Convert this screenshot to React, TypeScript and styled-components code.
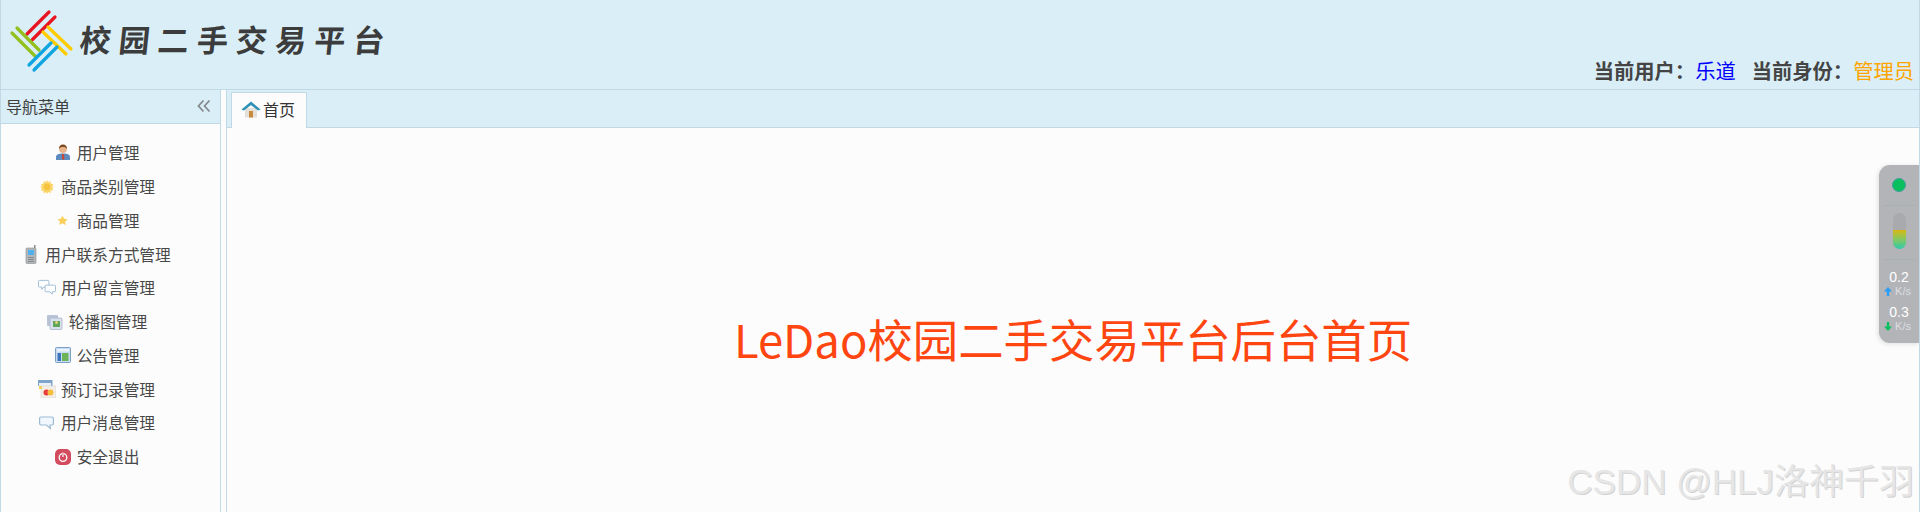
import React, { ReactNode } from 'react';
import styled, { createGlobalStyle } from 'styled-components';

const CJK = '"Noto Sans CJK SC", "Noto Sans", sans-serif';
const LINE = '#c0d9e4';
const SKY = '#d9eef6';
const PAPER = '#fcfcfc';

const GlobalStyle = createGlobalStyle`
    html, body { margin: 0; padding: 0; height: 512px; overflow: hidden; background: ${PAPER}; }
    body { font-family: ${CJK}; }
`;

const Page = styled.div`
    position: relative;
    width: 1920px;
    height: 512px;
    display: flex;
    flex-direction: column;
    box-sizing: border-box;
    border-left: 1px solid ${LINE};
    border-right: 1px solid ${LINE};
    overflow: hidden;
`;

const Header = styled.header`
    flex: 0 0 90px;
    box-sizing: border-box;
    display: flex;
    align-items: flex-start;
    background: ${SKY};
    border-bottom: 1px solid ${LINE};
`;

const Logo = styled.svg`
    flex: none;
    width: 79px;
    height: 79px;
`;

const Brand = styled.div`
    margin-top: 14px;
    font-size: 31px;
    line-height: 50px;
    font-weight: 700;
    letter-spacing: 8.1px;
    color: #3c3c3c;
    transform: skewX(-6deg);
`;

const UserInfo = styled.div`
    margin: auto 5px 4px auto;
    font-size: 20.3px;
    line-height: 30px;
    font-weight: 700;
    color: #444;
    white-space: nowrap;
`;

const UserValue = styled.span<{ $color: string }>`
    font-weight: 400;
    color: ${(p) => p.$color};
    margin-right: ${(p) => (p.$color === '#0000ff' ? '16px' : '0')};
`;

const Body = styled.div`
    flex: 1;
    display: flex;
    min-height: 0;
`;

const Sidebar = styled.aside`
    flex: 0 0 219px;
    border-right: 1px solid ${LINE};
    background: ${PAPER};
`;

const PanelTitle = styled.div`
    height: 34px;
    display: flex;
    align-items: center;
    justify-content: space-between;
    padding: 0 9px 2px 5px;
    box-sizing: border-box;
    background: ${SKY};
    border-bottom: 1px solid ${LINE};
    font-size: 16px;
    color: #3f3f3f;
`;

const Menu = styled.ul`
    list-style: none;
    margin: 0;
    padding: 12px 5px 0 0;
`;

const MenuRow = styled.li`
    height: 33.75px;
    display: flex;
    align-items: center;
    justify-content: center;
    font-size: 15.7px;
    color: #484848;
`;

const IconSlot = styled.span`
    width: 18px;
    height: 18px;
    margin-left: -23px;
    margin-right: 5px;
    display: flex;
    align-items: center;
    justify-content: center;

    svg { display: block; }
`;

const Main = styled.main`
    flex: 1;
    margin-left: 5px;
    border-left: 1px solid ${LINE};
    display: flex;
    flex-direction: column;
    background: ${PAPER};
`;

const TabStrip = styled.div`
    height: 37px;
    padding-left: 4px;
    display: flex;
    align-items: flex-end;
    background: ${SKY};
    border-bottom: 1px solid ${LINE};
`;

const Tab = styled.div`
    position: relative;
    top: 1px;
    box-sizing: border-box;
    width: 76px;
    height: 36px;
    padding: 0 0 3px 9px;
    display: flex;
    align-items: center;
    gap: 2px;
    font-size: 16px;
    color: #333;
    background: ${PAPER};
    border: 1px solid ${LINE};
    border-bottom: none;
`;

const Welcome = styled.div`
    flex: 1;
    display: flex;
    justify-content: center;
    padding-top: 176px;
    font-size: 45.4px;
    line-height: 68px;
    color: #ff4510;
`;

const Watermark = styled.div`
    position: absolute;
    right: 5px;
    bottom: 12px;
    font-family: "Liberation Sans", ${CJK};
    font-size: 35px;
    line-height: 36px;
    color: #e6e6e6;
    text-shadow: 1px 1px 0 #d2d2d2;
    white-space: nowrap;
`;

const Monitor = styled.div`
    position: absolute;
    top: 165px;
    right: 0;
    width: 40px;
    height: 178px;
    box-sizing: border-box;
    display: flex;
    flex-direction: column;
    align-items: center;
    background: #b3b4b8;
    border-radius: 11px 0 0 11px;
    box-shadow: -1px 1px 5px rgba(0, 0, 0, 0.12);
`;

const Lamp = styled.div`
    flex: none;
    box-sizing: border-box;
    width: 14px;
    height: 14px;
    margin-top: 13px;
    border-radius: 50%;
    background: #0abf5e;
    border: 1px solid #3f9ea0;
`;

const Rule = styled.div`
    flex: none;
    align-self: stretch;
    margin: 0 4px;
    height: 1px;
    background: #a9b0b2;
`;

const LampRule = styled(Rule)`
    margin-top: 13px;
`;

const Capsule = styled.div`
    flex: none;
    position: relative;
    width: 13px;
    height: 36px;
    margin: 7px 0 10px;
    border-radius: 7px;
    background: #a8aaae;
    overflow: hidden;
`;

const CapsuleFill = styled.div`
    position: absolute;
    left: 0;
    right: 0;
    bottom: 0;
    height: 19px;
    background: linear-gradient(#d8b716, #8cc85a 45%, #2ecbae);
`;

const Rate = styled.div`
    flex: none;
    margin-top: 9px;
    display: flex;
    flex-direction: column;
    align-items: center;
    font-family: "Liberation Sans", "Noto Sans", sans-serif;
    color: #fff;

    & + & { margin-top: 6px; }
`;

const RateValue = styled.div`
    font-size: 14px;
    line-height: 16px;
`;

const RateUnit = styled.div`
    display: flex;
    align-items: center;
    gap: 3px;
    margin-left: -3px;
    font-size: 11px;
    line-height: 13px;
    color: #dcdde0;
`;

const Chevrons = () => (
    <svg width="14" height="14" viewBox="0 0 14 14" fill="none" stroke="#858a8e" strokeWidth="1.8">
        <path d="M6.500 1.500 1.500 7l5 5.500M12.500 1.500 7.500 7l5 5.500" />
    </svg>
);

const HomeIcon = () => (
    <svg width="20" height="18" viewBox="0 0 20 18">
        <path d="M4 8h12v9.500H4z" fill="#e3dfd9" />
        <path d="M8 11h4v6.500H8z" fill="#c98a3e" />
        <path d="M.5 9.500 10 1.500l9.500 8-2.500 1L10 5 3 10.500z" fill="#2c90b6" />
    </svg>
);

const UserIcon = () => (
    <svg width="16" height="17" viewBox="0 0 16 17">
        <path d="M1 16v-3c0-2 2-3.500 7-3.500s7 1.500 7 3.500v3z" fill="#5e8cc0" />
        <path d="M7 10h2l.5 5-1.500 1-1-1z" fill="#c44b3c" />
        <circle cx="8" cy="5" r="4" fill="#e7b48d" />
        <path d="M4 5c0-3 1.500-4.500 4-4.500S12 2 12 5c-1-1.500-2-2-4-2s-3 .5-4 2z" fill="#7c4a22" />
    </svg>
);

const SunIcon = () => (
    <svg width="14" height="14" viewBox="0 0 14 14">
        <path
            d="M7 0l1.200 2.300L10.500 1l.2 2.700 2.700.2-1.300 2.300L14 7l-1.900 1 1.300 2.300-2.700.2-.2 2.700-2.300-1.300L7 14l-1-1.900-2.300 1.300-.2-2.700-2.700-.2L2.100 8 0 7l2.100-1-1.300-2.100 2.700-.2.2-2.700L6 2.300z"
            fill="#fbd568"
        />
        <circle cx="7" cy="7" r="3.200" fill="#f4c440" />
    </svg>
);

const StarIcon = () => (
    <svg width="11" height="11" viewBox="0 0 24 24">
        <path d="M12 1l3.400 7.300 7.900 1-5.800 5.400 1.500 7.900L12 17.800l-7 3.800 1.500-7.900L.7 9.300l7.900-1z" fill="#f9cf5a" />
    </svg>
);

const PhoneIcon = () => (
    <svg width="12" height="19" viewBox="0 0 12 19">
        <path d="M9 0h1.500v3H9z" fill="#8a8a8a" />
        <rect x="1" y="3" width="10" height="15.500" rx="1" fill="#b4b7ba" stroke="#8b8e92" strokeWidth=".6" />
        <rect x="3" y="5" width="6" height="5" fill="#4fb0ee" />
        <path d="M3 12h6v1H3zm0 2h6v1H3zm0 2h6v1H3z" fill="#85888c" />
    </svg>
);

const ChatIcon = () => (
    <svg width="19" height="17" viewBox="0 0 19 17" fill="#fff" stroke="#9dbbd6" strokeWidth="1">
        <path d="M1.500 1h9c.8 0 1 .5 1 1v5c0 .6-.3 1-1 1H6l-2 2.500V8H1.500c-.7 0-1-.4-1-1V2c0-.5.3-1 1-1z" />
        <path d="M8.500 6h9c.6 0 1 .4 1 1v5c0 .6-.4 1-1 1H15v2.500L12.500 13h-4c-.6 0-1-.4-1-1V7c0-.6.4-1 1-1z" />
    </svg>
);

const PictureIcon = () => (
    <svg width="17" height="16" viewBox="0 0 17 16">
        <rect x="1" y="1" width="11" height="11" rx="1" fill="#b9c4d6" />
        <rect x="4" y="4" width="12" height="11.500" rx="1" fill="#d9e1ee" stroke="#a7b4c9" strokeWidth=".8" />
        <rect x="7" y="7" width="7" height="6" fill="#5ea65a" />
        <circle cx="10.500" cy="8.500" r="1.500" fill="#e7cf7c" />
    </svg>
);

const BoardIcon = () => (
    <svg width="16" height="16" viewBox="0 0 16 16">
        <rect x=".5" y=".5" width="15" height="15" rx="1" fill="#c7dcf2" stroke="#7d9fc4" />
        <path d="M2 2h12v2.500H2z" fill="#e9f2fb" />
        <path d="M2.500 6H6v8H2.500z" fill="#3f75bb" />
        <path d="M7 6h6.500v8H7z" fill="#6db35a" />
    </svg>
);

const OrderIcon = () => (
    <svg width="18" height="18" viewBox="0 0 18 18">
        <path d="M0 0h14.500v6H0z" fill="#7fa4cc" />
        <path d="M1 3h12v6H1z" fill="#e9f0f8" />
        <rect x="3" y="6" width="15" height="12" fill="#f2eee7" stroke="#d5cfc4" strokeWidth=".5" />
        <path d="M1 6h3v3H1z" fill="#f3cf5a" />
        <circle cx="8.500" cy="12.500" r="3" fill="#ea3b3b" />
        <circle cx="12.500" cy="12.500" r="3" fill="#f5be3d" />
    </svg>
);

const BubbleIcon = () => (
    <svg width="15" height="14" viewBox="0 0 15 14" fill="#f2f7fd" stroke="#9dbbd6" strokeWidth="1.200">
        <path d="M2 1h11c.8 0 1.400.6 1.400 1.400v5.200c0 .8-.6 1.400-1.400 1.400h-2l.4 3.500L7.500 9H2C1.200 9 .6 8.400.6 7.600V2.400C.6 1.600 1.200 1 2 1z" />
    </svg>
);

const PowerIcon = () => (
    <svg width="16" height="16" viewBox="0 0 16 16">
        <rect width="16" height="16" rx="5" fill="#d34b5e" />
        <circle cx="8" cy="8.500" r="3.800" fill="none" stroke="#fff" strokeWidth="1.300" />
        <path d="M7 3h2v5H7z" fill="#d34b5e" />
        <path d="M7.400 3.500h1.200v4.500H7.400z" fill="#fff" />
    </svg>
);

const ArrowUp = () => (
    <svg width="8" height="9" viewBox="0 0 8 9">
        <path d="M4 0l4 4.500H5.200V9H2.800V4.500H0z" fill="#2a9df4" />
    </svg>
);

const ArrowDown = () => (
    <svg width="8" height="9" viewBox="0 0 8 9">
        <path d="M4 9L0 4.500h2.800V0h2.400v4.500H8z" fill="#0abf5e" />
    </svg>
);

const menuItems: { label: string; icon: ReactNode }[] = [
    { label: '用户管理', icon: <UserIcon /> },
    { label: '商品类别管理', icon: <SunIcon /> },
    { label: '商品管理', icon: <StarIcon /> },
    { label: '用户联系方式管理', icon: <PhoneIcon /> },
    { label: '用户留言管理', icon: <ChatIcon /> },
    { label: '轮播图管理', icon: <PictureIcon /> },
    { label: '公告管理', icon: <BoardIcon /> },
    { label: '预订记录管理', icon: <OrderIcon /> },
    { label: '用户消息管理', icon: <BubbleIcon /> },
    { label: '安全退出', icon: <PowerIcon /> },
];

const App = () => {
    return (
        <Page>
            <GlobalStyle />
            <Header>
                <Logo viewBox="0 0 79 79" fill="none" strokeWidth="3.200" strokeLinecap="round">
                    <g stroke="#e8141f">
                        <path d="M26 34 48 12M31 40 54 17" />
                    </g>
                    <g stroke="#93c01f">
                        <path d="M11 33 34 56M16 28 38 50" />
                    </g>
                    <g stroke="#ffcc00">
                        <path d="M47 27 70 49M42 32 65 54" />
                    </g>
                    <g stroke="#0ea5e0">
                        <path d="M28 65 50 43M33 70 56 47" />
                    </g>
                </Logo>
                <Brand>校园二手交易平台</Brand>
                <UserInfo>
                    当前用户：<UserValue $color="#0000ff">乐道</UserValue>
                    当前身份：<UserValue $color="#ffa500">管理员</UserValue>
                </UserInfo>
            </Header>
            <Body>
                <Sidebar>
                    <PanelTitle>
                        导航菜单
                        <Chevrons />
                    </PanelTitle>
                    <Menu>
                        {menuItems.map((item) => (
                            <MenuRow key={item.label}>
                                <IconSlot>{item.icon}</IconSlot>
                                {item.label}
                            </MenuRow>
                        ))}
                    </Menu>
                </Sidebar>
                <Main>
                    <TabStrip>
                        <Tab>
                            <HomeIcon />
                            首页
                        </Tab>
                    </TabStrip>
                    <Welcome>LeDao校园二手交易平台后台首页</Welcome>
                </Main>
            </Body>
            <Monitor>
                <Lamp />
                <LampRule />
                <Capsule>
                    <CapsuleFill />
                </Capsule>
                <Rule />
                <Rate>
                    <RateValue>0.2</RateValue>
                    <RateUnit>
                        <ArrowUp />
                        K/s
                    </RateUnit>
                </Rate>
                <Rate>
                    <RateValue>0.3</RateValue>
                    <RateUnit>
                        <ArrowDown />
                        K/s
                    </RateUnit>
                </Rate>
            </Monitor>
            <Watermark>CSDN @HLJ洛神千羽</Watermark>
        </Page>
    );
};

export default App;
